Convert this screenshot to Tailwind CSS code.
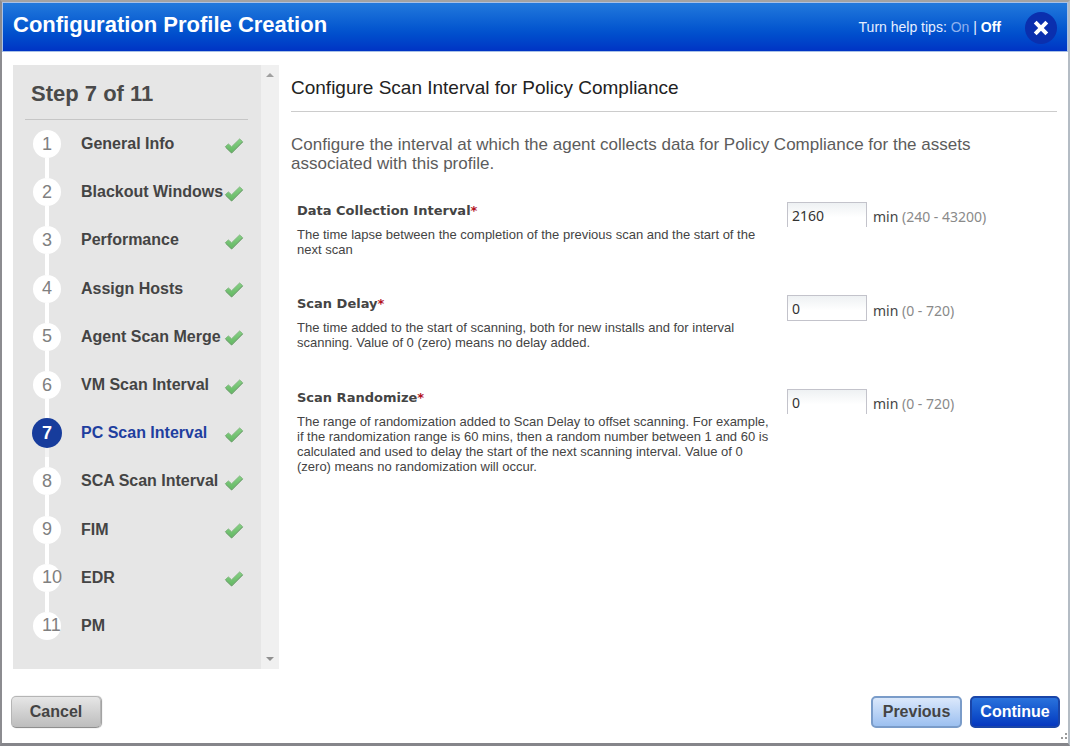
<!DOCTYPE html>
<html lang="en">
<head>
<meta charset="utf-8">
<meta name="viewport" content="width=device-width, initial-scale=1">
<title>Configuration Profile Creation</title>
<script src="https://cdn.jsdelivr.net/npm/@tailwindcss/browser@4"></script>
</head>
<body class="bg-white font-['Liberation_Sans',Arial,sans-serif] text-[#444]">
<svg class="block size-0" aria-hidden="true">
  <defs>
    <linearGradient id="tick" x1="0" y1="0" x2="0" y2="1">
      <stop offset="0" stop-color="#86d084"/>
      <stop offset="1" stop-color="#62b862"/>
    </linearGradient>
    <symbol id="check" viewBox="0 0 20 18">
      <path d="M1.4 9.6 L4.4 7 L7.6 9.8 L15.6 2 L18.6 4.6 L7.6 15.8 Z" fill="url(#tick)" stroke="#82b880" stroke-width="1" stroke-linejoin="round"/>
      <path d="M1.6 10.2 L7.6 16 L18.6 5" fill="none" stroke="#5d9a5d" stroke-width="1" stroke-linejoin="round"/>
    </symbol>
  </defs>
</svg>
<div class="flex min-h-screen flex-col border-t-2 border-r-2 border-b-3 border-l-2 border-t-[#a3a3a3] border-r-[#b4bcc4] border-b-[#85858a] border-l-[#8c8c90]">
  <header class="flex h-[50px] items-center justify-between border border-[#a9c1e6] bg-linear-to-b from-[#2279dc] to-[#0033c4] pr-[10px] pl-[10px] text-white">
    <h1 class="pb-[5px] text-[22px] leading-7 font-bold">Configuration Profile Creation</h1>
    <div class="flex items-center gap-6">
      <p class="text-[14px] leading-5 text-[#e6efff]">Turn help tips: <a href="#on" class="text-[#8fb0ee]">On</a> | <a href="#off" class="font-bold text-white">Off</a></p>
      <button type="button" aria-label="Close" class="mt-[2px] flex size-8 items-center justify-center rounded-full bg-[#0a2fae]">
        <svg class="size-4" viewBox="0 0 16 16" fill="none" stroke="#fff" stroke-width="4"><path d="M2.2 2.2 L13.8 13.8 M13.8 2.2 L2.2 13.8"/></svg>
      </button>
    </div>
  </header>

  <div class="flex flex-1 gap-3 pt-[13px] pr-[11px] pl-[11px]">
    <nav aria-label="Steps" class="flex w-[266px] shrink-0 bg-[#e6e6e6]">
      <div class="flex flex-1 flex-col pr-[13px] pb-[19px] pl-3">
        <h2 class="h-[55px] border-b border-[#c6c6c6] pt-[15px] pl-[6px] text-[22px] leading-7 font-bold text-[#4a4a4a]">Step 7 of 11</h2>
        <ol class="flex flex-1 flex-col text-[16px] font-bold">
          <li class="flex min-h-12 flex-1">
            <a href="#1" class="flex flex-1 items-center pr-1">
              <span class="flex w-11 flex-col items-center self-stretch"><span class="w-1 flex-1"></span><span class="flex size-7 items-center rounded-full bg-white pl-[9px] text-[18px] font-normal text-[#808080]">1</span><span class="w-1 flex-1 bg-white"></span></span>
              <span class="flex-1 pl-3 leading-6 whitespace-nowrap">General Info</span>
              <svg class="mt-[3px] h-[18px] w-5 shrink-0" role="img" aria-label="Completed"><use href="#check"/></svg>
            </a>
          </li>
          <li class="flex min-h-12 flex-1">
            <a href="#2" class="flex flex-1 items-center pr-1">
              <span class="flex w-11 flex-col items-center self-stretch"><span class="w-1 flex-1 bg-white"></span><span class="flex size-7 items-center rounded-full bg-white pl-[9px] text-[18px] font-normal text-[#808080]">2</span><span class="w-1 flex-1 bg-white"></span></span>
              <span class="flex-1 pl-3 leading-6 whitespace-nowrap">Blackout Windows</span>
              <svg class="mt-[3px] h-[18px] w-5 shrink-0" role="img" aria-label="Completed"><use href="#check"/></svg>
            </a>
          </li>
          <li class="flex min-h-12 flex-1">
            <a href="#3" class="flex flex-1 items-center pr-1">
              <span class="flex w-11 flex-col items-center self-stretch"><span class="w-1 flex-1 bg-white"></span><span class="flex size-7 items-center rounded-full bg-white pl-[9px] text-[18px] font-normal text-[#808080]">3</span><span class="w-1 flex-1 bg-white"></span></span>
              <span class="flex-1 pl-3 leading-6 whitespace-nowrap">Performance</span>
              <svg class="mt-[3px] h-[18px] w-5 shrink-0" role="img" aria-label="Completed"><use href="#check"/></svg>
            </a>
          </li>
          <li class="flex min-h-12 flex-1">
            <a href="#4" class="flex flex-1 items-center pr-1">
              <span class="flex w-11 flex-col items-center self-stretch"><span class="w-1 flex-1 bg-white"></span><span class="flex size-7 items-center rounded-full bg-white pl-[9px] text-[18px] font-normal text-[#808080]">4</span><span class="w-1 flex-1 bg-white"></span></span>
              <span class="flex-1 pl-3 leading-6 whitespace-nowrap">Assign Hosts</span>
              <svg class="mt-[3px] h-[18px] w-5 shrink-0" role="img" aria-label="Completed"><use href="#check"/></svg>
            </a>
          </li>
          <li class="flex min-h-12 flex-1">
            <a href="#5" class="flex flex-1 items-center pr-1">
              <span class="flex w-11 flex-col items-center self-stretch"><span class="w-1 flex-1 bg-white"></span><span class="flex size-7 items-center rounded-full bg-white pl-[9px] text-[18px] font-normal text-[#808080]">5</span><span class="w-1 flex-1 bg-white"></span></span>
              <span class="flex-1 pl-3 leading-6 whitespace-nowrap">Agent Scan Merge</span>
              <svg class="mt-[3px] h-[18px] w-5 shrink-0" role="img" aria-label="Completed"><use href="#check"/></svg>
            </a>
          </li>
          <li class="flex min-h-12 flex-1">
            <a href="#6" class="flex flex-1 items-center pr-1">
              <span class="flex w-11 flex-col items-center self-stretch"><span class="w-1 flex-1 bg-white"></span><span class="flex size-7 items-center rounded-full bg-white pl-[9px] text-[18px] font-normal text-[#808080]">6</span><span class="w-1 flex-1 bg-white"></span></span>
              <span class="flex-1 pl-3 leading-6 whitespace-nowrap">VM Scan Interval</span>
              <svg class="mt-[3px] h-[18px] w-5 shrink-0" role="img" aria-label="Completed"><use href="#check"/></svg>
            </a>
          </li>
          <li class="flex min-h-12 flex-1">
            <a href="#7" aria-current="step" class="flex flex-1 items-center pr-1 text-[#1f3f9f]">
              <span class="flex w-11 flex-col items-center self-stretch"><span class="w-1 flex-1 bg-white"></span><span class="flex size-[30px] items-center rounded-full bg-[#173c9c] pl-[10px] text-[18px] text-white">7</span><span class="w-1 flex-1 bg-[#f3f3f3]"></span></span>
              <span class="flex-1 pl-3 leading-6 whitespace-nowrap">PC Scan Interval</span>
              <svg class="mt-[3px] h-[18px] w-5 shrink-0" role="img" aria-label="Completed"><use href="#check"/></svg>
            </a>
          </li>
          <li class="flex min-h-12 flex-1">
            <a href="#8" class="flex flex-1 items-center pr-1">
              <span class="flex w-11 flex-col items-center self-stretch"><span class="w-1 flex-1 bg-white"></span><span class="flex size-7 items-center rounded-full bg-white pl-[9px] text-[18px] font-normal text-[#808080]">8</span><span class="w-1 flex-1 bg-white"></span></span>
              <span class="flex-1 pl-3 leading-6 whitespace-nowrap">SCA Scan Interval</span>
              <svg class="mt-[3px] h-[18px] w-5 shrink-0" role="img" aria-label="Completed"><use href="#check"/></svg>
            </a>
          </li>
          <li class="flex min-h-12 flex-1">
            <a href="#9" class="flex flex-1 items-center pr-1">
              <span class="flex w-11 flex-col items-center self-stretch"><span class="w-1 flex-1 bg-white"></span><span class="flex size-7 items-center rounded-full bg-white pl-[9px] text-[18px] font-normal text-[#808080]">9</span><span class="w-1 flex-1 bg-white"></span></span>
              <span class="flex-1 pl-3 leading-6 whitespace-nowrap">FIM</span>
              <svg class="mt-[3px] h-[18px] w-5 shrink-0" role="img" aria-label="Completed"><use href="#check"/></svg>
            </a>
          </li>
          <li class="flex min-h-12 flex-1">
            <a href="#10" class="flex flex-1 items-center pr-1">
              <span class="flex w-11 flex-col items-center self-stretch"><span class="w-1 flex-1 bg-white"></span><span class="flex size-7 items-center rounded-full bg-white pl-[9px] text-[18px] font-normal text-[#808080]">10</span><span class="w-1 flex-1 bg-white"></span></span>
              <span class="flex-1 pl-3 leading-6 whitespace-nowrap">EDR</span>
              <svg class="mt-[3px] h-[18px] w-5 shrink-0" role="img" aria-label="Completed"><use href="#check"/></svg>
            </a>
          </li>
          <li class="flex min-h-12 flex-1">
            <a href="#11" class="flex flex-1 items-center pr-1">
              <span class="flex w-11 flex-col items-center self-stretch"><span class="w-1 flex-1 bg-white"></span><span class="flex size-7 items-center rounded-full bg-white pl-[9px] text-[18px] font-normal text-[#808080]">11</span><span class="w-1 flex-1"></span></span>
              <span class="flex-1 pl-3 leading-6 whitespace-nowrap">PM</span>
            </a>
          </li>
        </ol>
      </div>
      <div class="flex w-[18px] flex-col items-center justify-between bg-[#f0f0f0] py-2" aria-hidden="true">
        <svg class="h-1 w-2" viewBox="0 0 8 4"><path d="M0 4 L4 0 L8 4Z" fill="#a0a0a0"/></svg>
        <svg class="h-1 w-2" viewBox="0 0 8 4"><path d="M0 0 L4 4 L8 0Z" fill="#909090"/></svg>
      </div>
    </nav>

    <main class="min-w-0 flex-1">
      <h2 class="h-[47px] border-b border-[#cccccc] pt-[9px] text-[19px] leading-7 text-[#222]">Configure Scan Interval for Policy Compliance</h2>
      <p class="mt-[23px] pr-8 text-[17px] leading-[19px] text-[#5c5c5c]">Configure the interval at which the agent collects data for Policy Compliance for the assets associated with this profile.</p>
      <form class="mt-7 ml-[6px] flex flex-col">
        <div class="flex min-h-[93px] items-start">
          <div class="w-[490px] shrink-0 pr-3">
            <label for="interval" class="block font-['DejaVu_Sans',sans-serif] text-[13px] leading-5 font-bold">Data Collection Interval<span class="text-[#b3121d]">*</span></label>
            <p class="mt-[6px] text-[13px] leading-[15px]">The time lapse between the completion of the previous scan and the start of the next scan</p>
          </div>
          <div class="mt-px flex items-center gap-[6px] font-['Noto_Sans',sans-serif] text-[14px]">
            <input id="interval" type="text" value="2160" class="h-[25px] w-20 border border-b-0 border-[#c3c3cb] bg-linear-to-b from-[#eef1f3] to-white to-60% px-1 text-[14px] text-[#333]">
            <span class="pt-[5px] leading-5">min <span class="text-[#8a8a8a]">(240 - 43200)</span></span>
          </div>
        </div>
        <div class="flex min-h-[94px] items-start">
          <div class="w-[490px] shrink-0 pr-3">
            <label for="delay" class="block font-['DejaVu_Sans',sans-serif] text-[13px] leading-5 font-bold">Scan Delay<span class="text-[#b3121d]">*</span></label>
            <p class="mt-[6px] text-[13px] leading-[15px]">The time added to the start of scanning, both for new installs and for interval scanning. Value of 0 (zero) means no delay added.</p>
          </div>
          <div class="mt-px flex items-center gap-[6px] font-['Noto_Sans',sans-serif] text-[14px]">
            <input id="delay" type="text" value="0" class="h-[26px] w-20 border border-[#c3c3cb] bg-linear-to-b from-[#eef1f3] to-white to-60% px-1 text-[14px] text-[#333]">
            <span class="pt-[5px] leading-5">min <span class="text-[#8a8a8a]">(0 - 720)</span></span>
          </div>
        </div>
        <div class="flex items-start">
          <div class="w-[490px] shrink-0 pr-3">
            <label for="randomize" class="block font-['DejaVu_Sans',sans-serif] text-[13px] leading-5 font-bold">Scan Randomize<span class="text-[#b3121d]">*</span></label>
            <p class="mt-[6px] text-[13px] leading-[15px]">The range of randomization added to Scan Delay to offset scanning. For example, if the randomization range is 60 mins, then a random number between 1 and 60 is calculated and used to delay the start of the next scanning interval. Value of 0 (zero) means no randomization will occur.</p>
          </div>
          <div class="mt-px flex items-center gap-[6px] font-['Noto_Sans',sans-serif] text-[14px]">
            <input id="randomize" type="text" value="0" class="h-[25px] w-20 border border-b-0 border-[#c3c3cb] bg-linear-to-b from-[#eef1f3] to-white to-60% px-1 text-[14px] text-[#333]">
            <span class="pt-[5px] leading-5">min <span class="text-[#8a8a8a]">(0 - 720)</span></span>
          </div>
        </div>
      </form>
    </main>
  </div>

  <footer class="flex h-[74px] items-start pt-[27px] pl-[9px]">
    <button type="button" class="h-8 w-[90px] rounded-[5px] border border-[#b5b5b5] border-b-[#8f8f8f] bg-linear-to-b from-[#e6e6e6] to-[#bdbdbd] text-[16px] font-bold text-[#444] shadow-[1px_0_1px_#999]">Cancel</button>
    <div class="ml-auto flex gap-2">
      <button type="button" class="h-8 w-[91px] rounded-[5px] border-2 border-[#7a9cc9] bg-linear-to-b from-[#dbe8fb] to-[#9cc0f0] text-[16px] font-bold text-[#444]">Previous</button>
      <button type="button" class="h-8 w-[90px] rounded-[5px] border-2 border-[#1a45a8] bg-linear-to-b from-[#2a72dc] to-[#0737bf] text-[16px] font-bold text-white">Continue</button>
    </div>
    <svg class="mt-[36px] size-2 shrink-0" viewBox="0 0 8 8" fill="#9a9a9a" aria-hidden="true"><path d="M5 1h2v2h-2zM5 5h2v2h-2zM1 5h2v2h-2z"/></svg>
  </footer>
</div>
</body>
</html>
